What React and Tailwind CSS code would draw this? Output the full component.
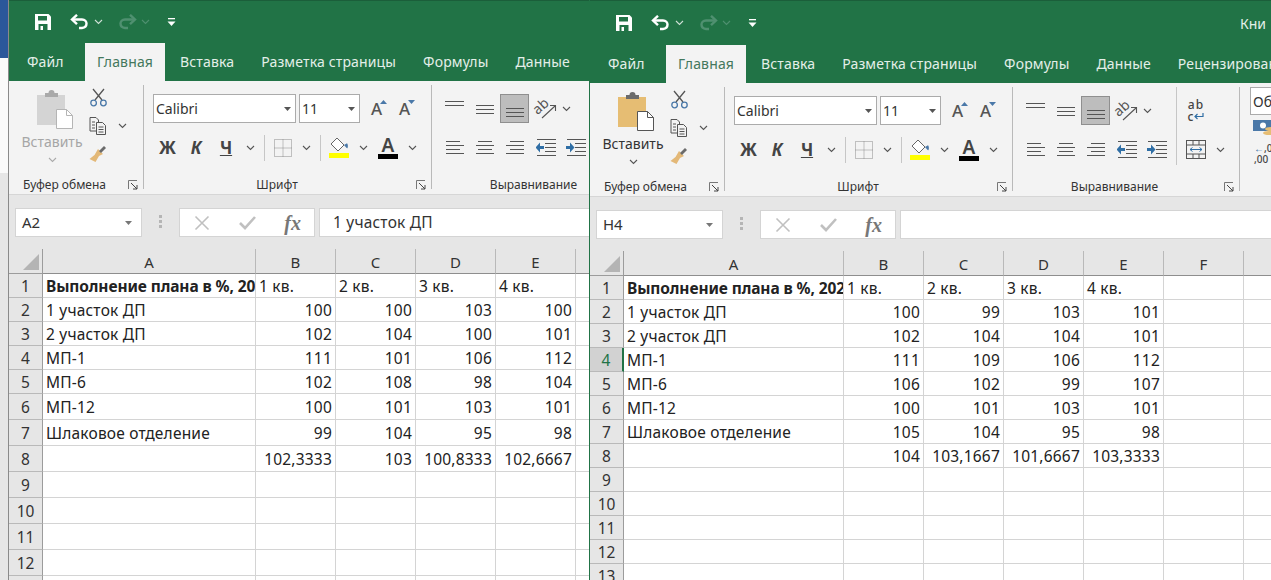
import React from 'react';

const sans = 'font-["Noto_Sans",sans-serif]';

const Chev = ({ className = 'text-[#555]' }) => (
  <svg width="9" height="6" viewBox="0 0 9 6" className={`${className} shrink-0`}>
    <path d="M1 1l3.5 3.5L8 1" fill="none" stroke="currentColor" strokeWidth="1.1" />
  </svg>
);

const Save = () => (
  <svg width="18" height="18" viewBox="0 0 18 18" className="shrink-0">
    <path d="M1 1h13.5L17 3.5V17H1z" fill="#fff" />
    <rect x="4" y="3" width="9" height="4.5" fill="#217346" />
    <rect x="4.500" y="11" width="9" height="6" fill="#217346" />
    <rect x="6.500" y="13" width="2.500" height="4" fill="#fff" />
  </svg>
);

const Undo = ({ flip, color }) => (
  <svg width="20" height="16" viewBox="0 0 20 16" className={`shrink-0 ${flip ? '-scale-x-100' : ''}`}>
    <path d="M2 5.500h10c6 0 6 8 0 8.500H9" fill="none" stroke={color} strokeWidth="2.4" />
    <path d="M7 .8L2 5.500l5 4.700" fill="none" stroke={color} strokeWidth="2.4" />
  </svg>
);

const QatMore = () => (
  <svg width="9" height="9" viewBox="0 0 9 9" className="shrink-0">
    <rect x="1" y="0" width="7" height="1.3" fill="#fff" />
    <path d="M0.5 3.500h8L4.500 8z" fill="#fff" />
  </svg>
);

const PasteIcon = ({ on }) => {
  const board = on ? '#e6bd73' : '#d4d4d4';
  const clip = on ? '#6b6b6b' : '#a9a9a9';
  const line = on ? '#555' : '#b5b5b5';
  return (
    <svg width="38" height="39" viewBox="0 0 38 39">
      <rect x="1" y="5" width="28" height="30" fill={board} />
      <path d="M9 7V3h3.500a3 3 0 016 0H22v4z" fill={clip} />
      <path d="M20.500 19.500h10l6 6v13h-16z" fill="#fff" stroke={line} />
      <path d="M30.500 19.500v6h6" fill="none" stroke={line} />
    </svg>
  );
};

const Scissors = () => (
  <svg width="17" height="19" viewBox="0 0 17 19">
    <path d="M3 1l9 11M14 1L5 12" stroke="#555" strokeWidth="1.3" fill="none" />
    <circle cx="3.600" cy="15" r="2.800" fill="none" stroke="#4a78a8" strokeWidth="1.3" />
    <circle cx="13.400" cy="15" r="2.800" fill="none" stroke="#4a78a8" strokeWidth="1.3" />
  </svg>
);

const CopyIcon = () => (
  <svg width="18" height="18" viewBox="0 0 18 18">
    <path d="M1 .5h6l2.500 2.500v11H1z" fill="#f3f3f3" stroke="#555" />
    <path d="M7.500 5.500h6l3 3v9h-9z" fill="#f3f3f3" stroke="#555" />
    <path d="M3 5h3M3 8h3M3 11h3M9.500 10h5M9.500 12.500h5M9.500 15h5" stroke="#555" />
  </svg>
);

const Brush = () => (
  <svg width="18" height="18" viewBox="0 0 18 18">
    <path d="M9 4l5 5-4 2-3.500 6L0.500 14l5-4z" fill="#e3b877" />
    <path d="M10 6l5-5 2 2-5 5z" fill="#6b6b6b" />
  </svg>
);

const Launcher = () => (
  <svg width="10" height="10" viewBox="0 0 10 10">
    <path d="M.5 9V.5H9" fill="none" stroke="#777" />
    <path d="M3 3l6 6M9 5v4H5" fill="none" stroke="#444" />
  </svg>
);

const Borders = () => (
  <svg width="18" height="18" viewBox="0 0 18 18">
    <rect x=".5" y=".5" width="17" height="17" fill="none" stroke="#8a8a8a" strokeDasharray="1 1" />
    <path d="M9 .5v17M.5 9h17" stroke="#8a8a8a" strokeDasharray="1 1" />
  </svg>
);

const Fill = () => (
  <svg width="21" height="21" viewBox="0 0 21 21">
    <path d="M8 1l7 7-6 6-7-7z" fill="#fff" stroke="#666" />
    <path d="M15 8c2-1 3-2 3.500-1s.5 3 0 4-1.500-1-3.500-3z" fill="#4a78a8" />
    <rect x="0" y="16" width="20" height="5" fill="#ffff00" />
  </svg>
);

const FontColor = () => (
  <div className="flex flex-col items-center">
    <span className={`${sans} text-[19px] font-semibold leading-[17px] text-[#444]`}>A</span>
    <span className="h-[5px] w-[20px] bg-black" />
  </div>
);

const Grow = ({ down }) => (
  <div className="flex items-start">
    <span className={`${sans} text-[17px] leading-[20px] font-medium text-[#555]`}>A</span>
    <svg width="7" height="4" viewBox="0 0 7 4" className="mt-[1px] -ml-[2px]">
      {down ? <path d="M0 0h7L3.500 4z" fill="#4a78a8" /> : <path d="M0 4h7L3.500 0z" fill="#4a78a8" />}
    </svg>
  </div>
);

// rows: отступ и ширина каждой линии значка выравнивания
const Lines = ({ rows, top = 0 }) => (
  <svg width="20" height="18" viewBox="0 0 20 18">
    {rows.map(([x, w], i) => (
      <rect key={i} x={x} y={top + i * 4} width={w} height="1" fill="#555" />
    ))}
  </svg>
);

const Orient = () => (
  <svg width="24" height="20" viewBox="0 0 24 20">
    <text x="1" y="13" transform="rotate(-42 7 10)" className={sans} fontSize="14" fill="#555">ab</text>
    <path d="M9 19L22 7M17 6.500h5.500V12" fill="none" stroke="#555" strokeWidth="1.1" />
  </svg>
);

const Indent = ({ right }) => (
  <svg width="20" height="17" viewBox="0 0 20 17">
    <path d="M1 .5h19M9 4.500h11M9 8.500h11M9 12.500h11M1 16.500h19" stroke="#555" />
    {right ? (
      <path d="M0 7h4V3.500l4.500 5-4.500 5V10H0z" fill="#2f6ea5" />
    ) : (
      <path d="M8 7H4V3.500l-4.500 5 4.500 5V10h4z" fill="#2f6ea5" />
    )}
  </svg>
);

const Merge = () => (
  <svg width="20" height="19" viewBox="0 0 20 19">
    <rect x=".5" y=".5" width="19" height="18" fill="none" stroke="#555" />
    <path d="M.5 5h19M.5 14h19M7 .5V5M13 .5V5M7 14v4.500M13 14v4.500" stroke="#555" />
    <path d="M4 9.500h12M6.500 7.500l-2.500 2 2.500 2M13.500 7.500l2.500 2-2.500 2" fill="none" stroke="#2f6ea5" />
  </svg>
);

const Slot = ({ w, children, active }) => (
  <div className={`${w} flex h-full shrink-0 items-center justify-center ${active ? 'border border-[#8f8f8f] bg-[#bdbdbd]' : ''}`}>
    {children}
  </div>
);

const GroupLabel = ({ children }) => (
  <div className="flex h-[18px] items-center justify-center">
    <span className={`${sans} whitespace-nowrap text-[12px] leading-none text-[#333]`}>{children}</span>
  </div>
);

const Rule = ({ m = 'ml-[6px]' }) => <div className={`h-[26px] ${m} w-px shrink-0 bg-[#c6c6c6]`} />;

const Ribbon = ({ active }) => (
  <div className="flex h-[114px] w-[720px] shrink-0 border-b border-[#d6d6d6] bg-[#f3f3f3]">
    {/* Буфер обмена */}
    <div className="flex w-[134px] shrink-0 flex-col">
      <div className="flex h-[96px]">
        <div className="ml-[8px] flex w-[70px] flex-col items-center pt-[9px]">
          <div className="ml-[5px]"><PasteIcon on={active} /></div>
          <span className={`${sans} mt-[3px] text-[14px] leading-[20px] ${active ? 'text-[#333]' : 'text-[#a6a6a6]'}`}>Вставить</span>
          <div className="mt-[5px]"><Chev className={active ? 'text-[#555]' : 'text-[#aaa]'} /></div>
        </div>
        <div className="flex w-[22px] flex-col items-center gap-[10px] pt-[7px]">
          <Scissors />
          <CopyIcon />
          <Brush />
        </div>
        <div className="ml-[9px] pt-[42px]"><Chev /></div>
      </div>
      <div className="flex items-center">
        <div className="w-[111px]"><GroupLabel>Буфер обмена</GroupLabel></div>
        <div className="ml-[3px] flex w-[20px] justify-center"><Launcher /></div>
      </div>
    </div>
    <div className="mt-[4px] mb-[5px] w-px shrink-0 bg-[#b9b9b9]" />

    {/* Шрифт */}
    <div className="flex w-[287px] shrink-0 flex-col">
      <div className="h-[96px] pl-[9px] pt-[13px]">
        <div className="flex h-[29px] items-center">
          <div className="flex h-full w-[143px] shrink-0 items-center justify-between border border-[#ababab] bg-white pl-[2px] pr-[4px]">
            <span className={`${sans} text-[14px] text-[#333]`}>Calibri</span>
            <svg width="7" height="4" viewBox="0 0 7 4"><path d="M0 0h7L3.500 4z" fill="#555" /></svg>
          </div>
          <div className="ml-[3px] flex h-full w-[61px] shrink-0 items-center justify-between border border-[#ababab] bg-white pl-[2px] pr-[4px]">
            <span className={`${sans} text-[14px] text-[#333]`}>11</span>
            <svg width="7" height="4" viewBox="0 0 7 4"><path d="M0 0h7L3.500 4z" fill="#555" /></svg>
          </div>
          <Slot w="w-[28px] ml-[5px]"><Grow /></Slot>
          <Slot w="w-[28px]"><Grow down /></Slot>
        </div>
        <div className="mt-[10px] flex h-[29px] items-center">
          <Slot w="w-[29px]"><span className={`${sans} text-[17px] font-bold text-[#444]`}>Ж</span></Slot>
          <Slot w="w-[28px]"><span className={`${sans} text-[17px] font-bold italic text-[#444]`}>К</span></Slot>
          <Slot w="w-[32px]"><span className={`${sans} text-[17px] font-bold text-[#444] underline`}>Ч</span></Slot>
          <Slot w="w-[16px]"><Chev /></Slot>
          <Rule />
          <Slot w="w-[36px]"><Borders /></Slot>
          <Slot w="w-[10px]"><Chev /></Slot>
          <Rule m="ml-[9px]" />
          <Slot w="w-[36px]"><Fill /></Slot>
          <Slot w="w-[12px]"><Chev /></Slot>
          <Slot w="w-[38px]"><FontColor /></Slot>
          <Slot w="w-[10px]"><Chev /></Slot>
        </div>
      </div>
      <div className="flex items-center">
        <div className="w-[266px]"><GroupLabel>Шрифт</GroupLabel></div>
        <div className="flex w-[21px] justify-center"><Launcher /></div>
      </div>
    </div>
    <div className="mt-[4px] mb-[5px] w-px shrink-0 bg-[#b9b9b9]" />

    {/* Выравнивание */}
    <div className="flex w-[226px] shrink-0 flex-col">
      <div className="flex h-[96px]">
        <div className="w-[163px] shrink-0 pl-[8px] pt-[13px]">
          <div className="flex h-[29px] items-center">
            <Slot w="w-[30px]"><Lines rows={[[0, 19], [0, 19]]} top={1} /></Slot>
            <Slot w="w-[30px]"><Lines rows={[[1, 18], [1, 18], [1, 18]]} top={5} /></Slot>
            <Slot w="w-[29px]" active><Lines rows={[[1, 18], [1, 18], [1, 18]]} top={8} /></Slot>
            <Slot w="w-[31px]"><Orient /></Slot>
            <Slot w="w-[12px]"><Chev /></Slot>
          </div>
          <div className="mt-[10px] flex h-[29px] items-center">
            <Slot w="w-[30px]"><Lines rows={[[1, 14], [1, 18], [1, 14], [1, 18]]} top={2} /></Slot>
            <Slot w="w-[30px]"><Lines rows={[[3, 14], [1, 18], [3, 14], [1, 18]]} top={2} /></Slot>
            <Slot w="w-[30px]"><Lines rows={[[5, 14], [1, 18], [5, 14], [1, 18]]} top={2} /></Slot>
            <Slot w="w-[31px]"><Indent /></Slot>
            <Slot w="w-[30px]"><Indent right /></Slot>
          </div>
        </div>
        {active && (
          <>
            <div className="mt-[4px] h-[78px] w-px bg-[#c6c6c6]" />
            <div className="flex flex-col pt-[13px]">
              <div className="ml-[7px] flex h-[29px] w-[24px] flex-col items-center justify-center">
                <span className={`${sans} text-[12px] leading-[12px] font-medium tracking-[1px] text-[#444]`}>ab</span>
                <div className="flex items-center">
                  <span className={`${sans} text-[12px] leading-[12px] font-medium text-[#444]`}>c</span>
                  <svg width="11" height="8" viewBox="0 0 11 8"><path d="M10 0v3.500H2M4.500 1L2 3.500 4.500 6" fill="none" stroke="#2f6ea5" strokeWidth="1.2" /></svg>
                </div>
              </div>
              <div className="mt-[10px] ml-[9px] flex h-[29px] items-center">
                <Merge />
                <div className="ml-[10px]"><Chev /></div>
              </div>
            </div>
          </>
        )}
      </div>
      <div className="flex items-center">
        <div className="w-[203px]"><GroupLabel>Выравнивание</GroupLabel></div>
        {active && <div className="ml-[2px] flex w-[21px] justify-center"><Launcher /></div>}
      </div>
    </div>

    {/* Число, видна только часть */}
    {active && (
      <>
        <div className="mt-[4px] mb-[5px] w-px shrink-0 bg-[#b9b9b9]" />
        <div className="ml-[10px] flex flex-col pt-[4px]">
          <div className="flex h-[28px] w-[60px] items-center border border-[#ababab] bg-white pl-[2px]">
            <span className={`${sans} text-[14px] text-[#333]`}>Об</span>
          </div>
          <svg width="40" height="18" viewBox="0 0 40 18" className="mt-[5px] ml-[3px]">
            <rect x="0" y="0" width="22" height="11" fill="#4a78a8" />
            <circle cx="10" cy="5.500" r="3" fill="#fff" />
            <ellipse cx="18" cy="9" rx="6" ry="2" fill="#e6bd73" />
            <ellipse cx="16" cy="13" rx="6" ry="2" fill="#e6bd73" />
          </svg>
          <div className={`${sans} mt-[5px] ml-[4px] text-[10px] leading-[11px] font-medium text-[#444]`}>
            <div className="flex items-center"><span className="text-[#2f6ea5]">←</span>,0</div>
            <div>,00</div>
          </div>
        </div>
      </>
    )}
  </div>
);

const QuickBar = ({ h, title }) => (
  <div className={`${h} flex shrink-0 items-center overflow-hidden border-t border-[#1b5e3a] pl-[25px]`}>
    <Save />
    <div className="ml-[18px] flex shrink-0"><Undo color="#fff" /></div>
    <div className="ml-[4px] flex shrink-0"><Chev className="text-[#cfe0d6]" /></div>
    <div className="ml-[14px] flex shrink-0"><Undo flip color="#4f9070" /></div>
    <div className="ml-[4px] flex shrink-0"><Chev className="text-[#4f9070]" /></div>
    <div className="ml-[17px] flex shrink-0"><QatMore /></div>
    {title && <span className={`${sans} ml-[483px] shrink-0 whitespace-nowrap text-[14px] text-[#e4efe9]`}>{title}</span>}
  </div>
);

const TabBar = ({ tabs }) => (
  <div className="flex h-[38px] shrink-0 items-end overflow-hidden whitespace-nowrap">
    {tabs.map((t) => (
      <div
        key={t}
        className={`${sans} flex h-[38px] shrink-0 items-center pb-[1px] text-[14px] tracking-[0.15px] ${
          t === 'Файл' ? 'w-[76px] pl-[18px]' : 'px-[13.5px]'
        } ${t === 'Главная' ? 'mr-[1.5px] w-[80px] justify-center bg-[#f3f3f3] text-[#44785d]' : 'text-[#e4efe9]'}`}
      >
        {t}
      </div>
    ))}
  </div>
);

const XIcon = () => (
  <svg width="16" height="16" viewBox="0 0 16 16"><path d="M1.500 1.500l13 13M14.500 1.500l-13 13" stroke="#c0c0c0" strokeWidth="1.6" /></svg>
);

const CheckIcon = () => (
  <svg width="17" height="14" viewBox="0 0 17 14"><path d="M1 7l5 5L16 1" fill="none" stroke="#c0c0c0" strokeWidth="2.6" /></svg>
);

const FormulaBar = ({ cell, value }) => (
  <div className="flex h-[54px] shrink-0 items-start bg-[#e6e6e6] pl-[6px] pt-[13px]">
    <div className="flex h-[29px] w-[127px] shrink-0 items-center justify-between border border-[#d4d4d4] bg-white pl-[6px] pr-[9px]">
      <span className={`${sans} text-[15px] text-[#333]`}>{cell}</span>
      <svg width="7" height="4" viewBox="0 0 7 4"><path d="M0 0h7L3.500 4z" fill="#777" /></svg>
    </div>
    <div className="ml-[17px] mt-[7px] flex w-[3px] shrink-0 flex-col gap-[2px]">
      <span className="h-[3px] bg-[#b5b5b5]" />
      <span className="h-[3px] bg-[#b5b5b5]" />
      <span className="h-[3px] bg-[#b5b5b5]" />
    </div>
    <div className="ml-[17px] flex h-[29px] w-[136px] shrink-0 items-center justify-between border border-[#d4d4d4] bg-white pl-[14px] pr-[13px]">
      <XIcon />
      <CheckIcon />
      <span className="font-['Liberation_Serif',serif] text-[20px] font-bold italic leading-none text-[#777]">fx</span>
    </div>
    <div className={`${sans} ml-[4px] flex h-[29px] w-[500px] shrink-0 items-center border border-[#d4d4d4] bg-white pl-[13px] text-[15.5px] tracking-[0.2px] text-[#333]`}>
      {value}
    </div>
  </div>
);

const Cell = ({ w, right, bold, children }) => (
  <div
    className={`${w} ${sans} flex h-full shrink-0 items-center overflow-hidden whitespace-nowrap border-r border-b border-[#d4d4d4] px-[3px] pt-[2px] text-[15.5px] text-[#222] ${
      right ? 'justify-end' : ''
    } ${bold ? 'font-bold tracking-[-0.1px]' : 'tracking-[0.2px]'}`}
  >
    {children}
  </div>
);

const Sheet = ({ colA, letters, title, rows, heights, activeRow }) => (
  <div className="bg-white">
    <div className="flex h-[25px] bg-[#e6e6e6]">
      <div className="flex w-[34px] shrink-0 items-end justify-end border-r border-b border-[#9c9c9c] pb-[3px] pr-[3px]">
        <svg width="16" height="16" viewBox="0 0 16 16"><path d="M16 0v16H0z" fill="#b4b4b4" /></svg>
      </div>
      <div className={`${colA} ${sans} flex shrink-0 items-center justify-center border-r border-b border-b-[#8e8e8e] border-r-[#b9b9b9] pt-[2px] text-[15px] text-[#333]`}>A</div>
      {letters.map((l, i) => (
        <div key={i} className={`${sans} flex w-20 shrink-0 items-center justify-center border-r border-b border-b-[#8e8e8e] border-r-[#b9b9b9] pt-[2px] text-[15px] text-[#333]`}>{l}</div>
      ))}
    </div>
    {rows.map((r, i) => (
      <div key={i} className={`flex ${heights[i]}`}>
        <div
          className={`${sans} flex w-[34px] shrink-0 items-center justify-center border-b border-b-[#b9b9b9] pt-[2px] text-[15.5px] ${
            activeRow === i ? 'border-r-2 border-r-[#217346] bg-[#d2d2d2] text-[#217346]' : 'border-r border-r-[#9c9c9c] bg-[#e6e6e6] text-[#333]'
          }`}
        >
          {i + 1}
        </div>
        <Cell w={colA} bold={i === 0}>{i === 0 ? title : r[0]}</Cell>
        {letters.map((l, j) => (
          <Cell key={j} w="w-20" right={i > 0}>{r[j + 1]}</Cell>
        ))}
      </div>
    ))}
  </div>
);

const HEAD = ['', '1 кв.', '2 кв.', '3 кв.', '4 кв.'];

const LEFT = [
  HEAD,
  ['1 участок ДП', '100', '100', '103', '100'],
  ['2 участок ДП', '102', '104', '100', '101'],
  ['МП-1', '111', '101', '106', '112'],
  ['МП-6', '102', '108', '98', '104'],
  ['МП-12', '100', '101', '103', '101'],
  ['Шлаковое отделение', '99', '104', '95', '98'],
  ['', '102,3333', '103', '100,8333', '102,6667'],
  [], [], [], [], [],
];

const RIGHT = [
  HEAD,
  ['1 участок ДП', '100', '99', '103', '101'],
  ['2 участок ДП', '102', '104', '104', '101'],
  ['МП-1', '111', '109', '106', '112'],
  ['МП-6', '106', '102', '99', '107'],
  ['МП-12', '100', '101', '103', '101'],
  ['Шлаковое отделение', '105', '104', '95', '98'],
  ['', '104', '103,1667', '101,6667', '103,3333'],
  [], [], [], [], [], [],
];

const LEFT_H = ['h-6', 'h-6', 'h-6', 'h-6', 'h-6', 'h-[26px]', 'h-[26px]', 'h-[26px]', 'h-[26px]', 'h-[26px]', 'h-[26px]', 'h-[26px]', 'h-[26px]'];
const RIGHT_H = RIGHT.map(() => 'h-6');

const LEFT_TABS = ['Файл', 'Главная', 'Вставка', 'Разметка страницы', 'Формулы', 'Данные'];
const RIGHT_TABS = [...LEFT_TABS, 'Рецензирование'];

export default function App() {
  return (
    <div className="flex h-[580px] w-[1271px] overflow-hidden bg-white">
      {/* край окна за таблицами */}
      <div className="flex w-[8px] shrink-0 flex-col">
        <div className="h-[58px] bg-[#2b579a]" />
        <div className="h-[115px] bg-[#fafafa]" />
        <div className="flex-1 bg-[#e6e6e6]" />
      </div>

      <div className="flex h-[580px] w-[581px] shrink-0 flex-col overflow-hidden border-l border-[#8a8a8a]">
        <div className="bg-[#217346]">
          <QuickBar h="h-[43px]" />
          <TabBar tabs={LEFT_TABS} />
        </div>
        <Ribbon />
        <FormulaBar cell="A2" value="1 участок ДП" />
        <Sheet colA="w-[213px]" letters={['B', 'C', 'D', 'E', '']} title="Выполнение плана в %, 20" rows={LEFT} heights={LEFT_H} />
      </div>

      <div className="flex h-[580px] w-[682px] shrink-0 flex-col overflow-hidden border-l border-[#217346]">
        <div className="bg-[#217346]">
          <QuickBar h="h-[45px]" title="Кни" />
          <TabBar tabs={RIGHT_TABS} />
        </div>
        <Ribbon active />
        <FormulaBar cell="H4" value="" />
        <Sheet colA="w-[220px]" letters={['B', 'C', 'D', 'E', 'F', '']} title="Выполнение плана в %, 202" rows={RIGHT} heights={RIGHT_H} activeRow={3} />
      </div>
    </div>
  );
}
